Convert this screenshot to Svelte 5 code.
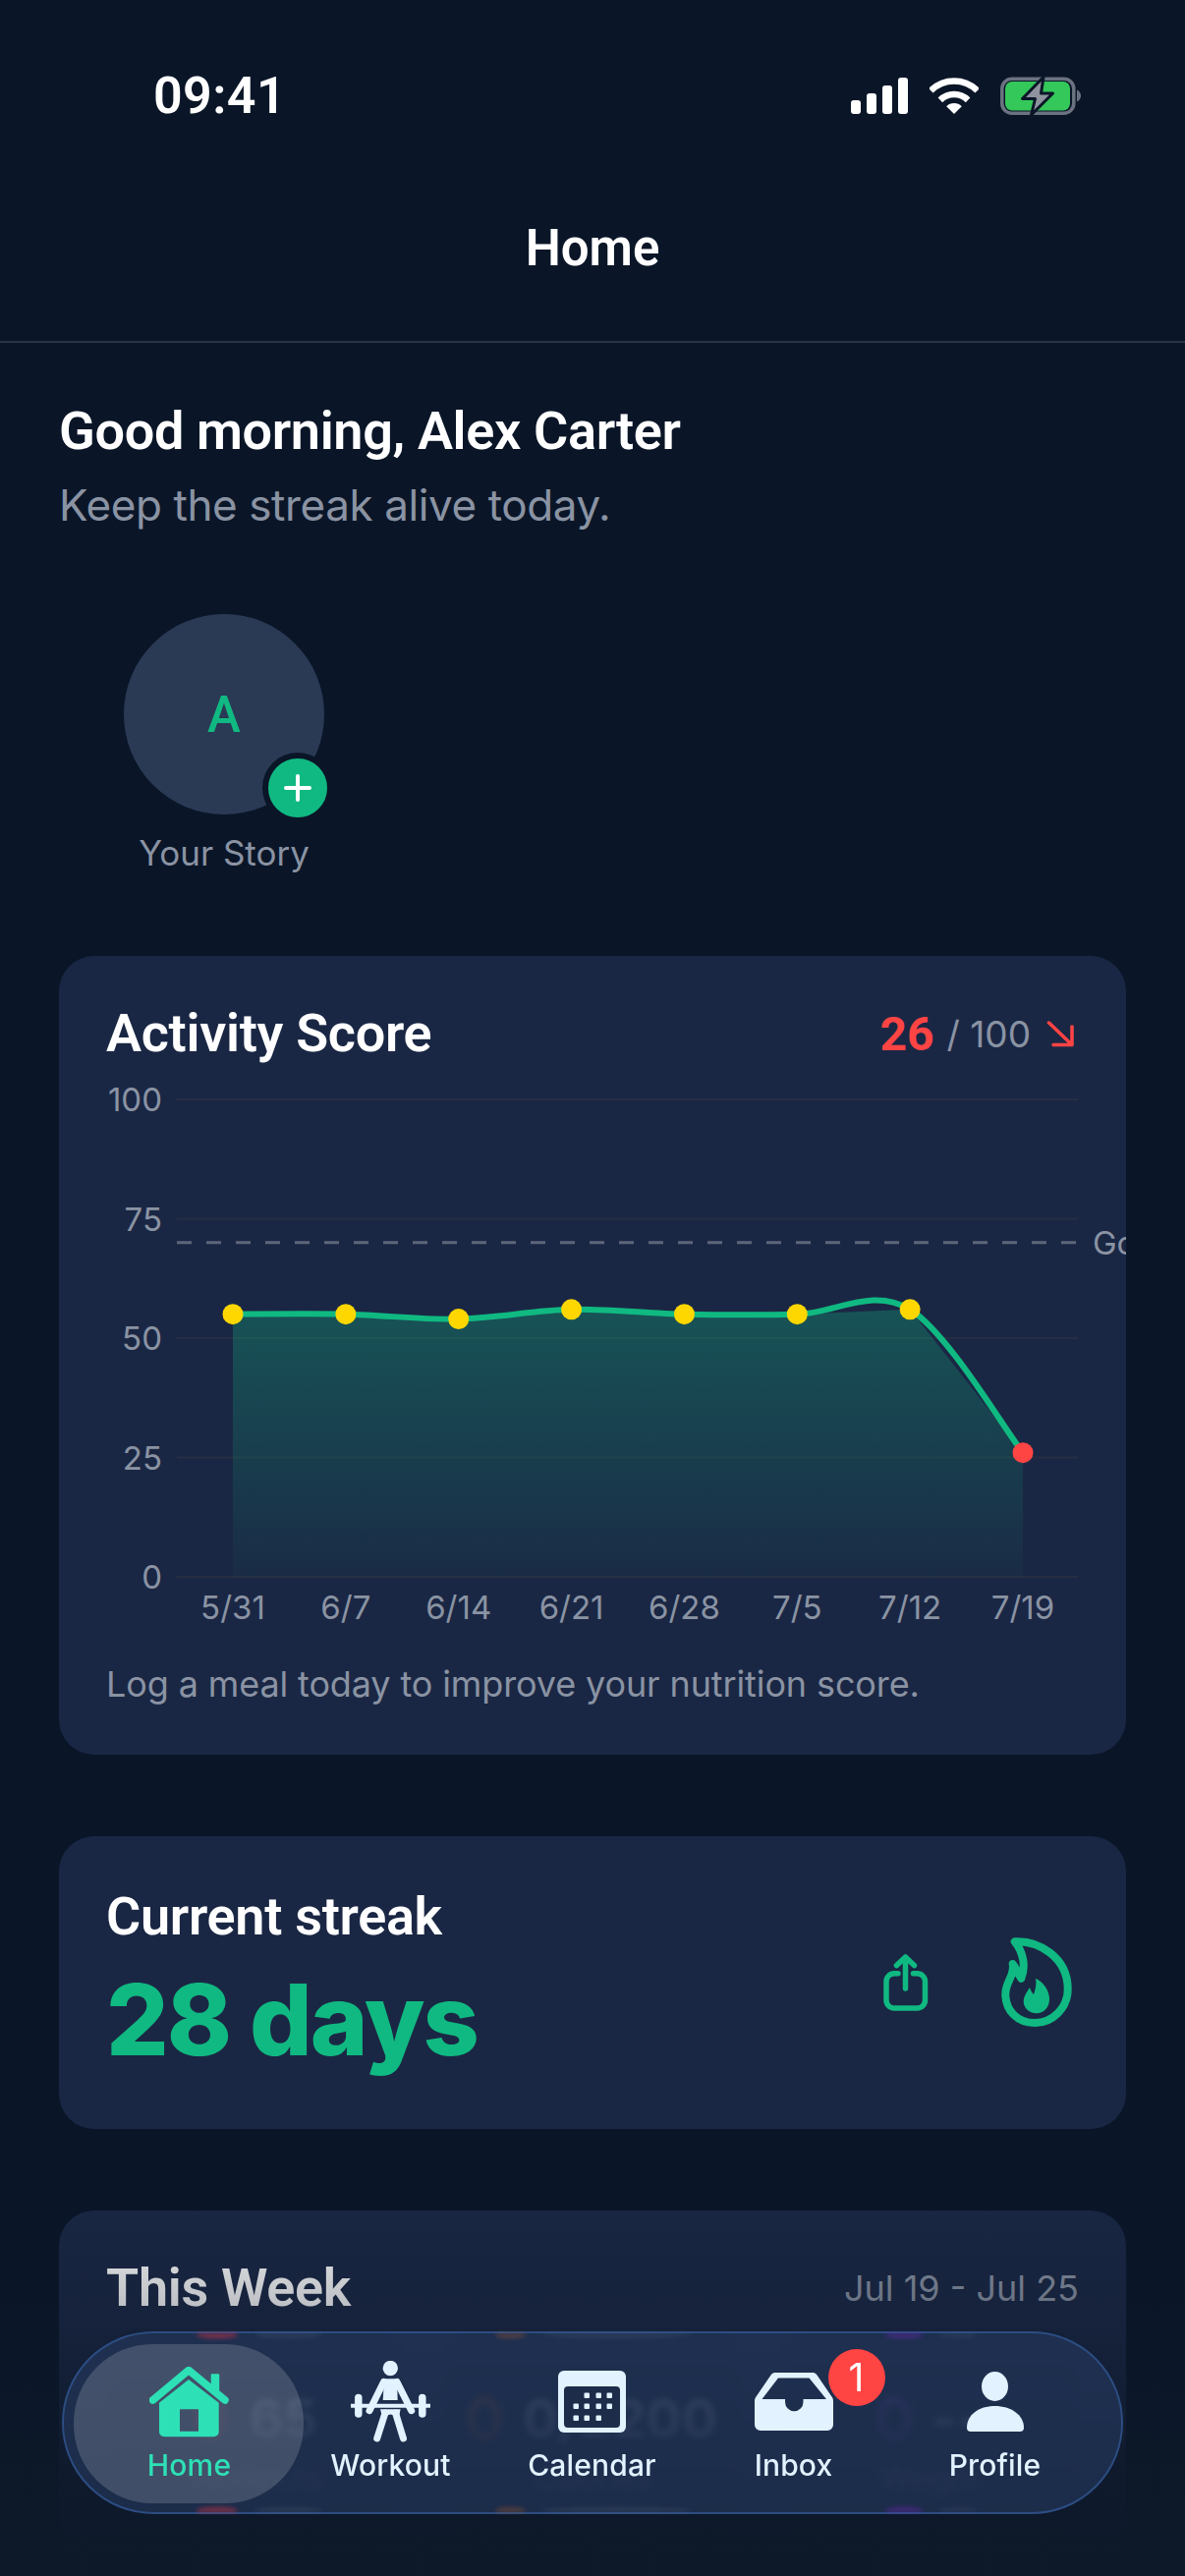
<script lang="ts">
	const points = [55, 55, 54, 56, 55, 55, 56, 26];
	const labels = ['5/31', '6/7', '6/14', '6/21', '6/28', '7/5', '7/12', '7/19'];
	const ticks = [100, 75, 50, 25, 0];

	const left = 129;
	const stepX = 114.86;
	const base = 522;
	const unit = 4.86;

	const px = (i: number) => left + i * stepX;
	const py = (v: number) => base - v * unit;

	// catmull-rom through the samples
	function smooth() {
		const p = points.map((v, i) => [px(i), py(v)]);
		let d = `M${p[0][0]} ${p[0][1]}`;
		for (let i = 0; i < p.length - 1; i++) {
			const a = p[Math.max(i - 1, 0)];
			const b = p[i];
			const c = p[i + 1];
			const e = p[Math.min(i + 2, p.length - 1)];
			d += ` C${b[0] + (c[0] - a[0]) / 6} ${b[1] + (c[1] - a[1]) / 6} ${c[0] - (e[0] - b[0]) / 6} ${c[1] - (e[1] - b[1]) / 6} ${c[0]} ${c[1]}`;
		}
		return d;
	}

	const area =
		`M${px(0)} ${base} ` +
		points.map((v, i) => `L${px(i)} ${py(v)}`).join(' ') +
		` L${px(7)} ${base} Z`;

	const weekCards = [
		{ color: '#ff4444', value: '65', sub: 'Workouts' },
		{ color: '#f97316', value: '0/2200', sub: 'Calories' },
		{ color: '#a855f7', value: '--', sub: 'Weight' }
	];

	const calendarDots = [
		[29, 25], [41, 25], [52, 25],
		[18, 36], [29, 36], [41, 36], [52, 36],
		[18, 48], [29, 48], [41, 48]
	];

	// bits of the cards behind the bar that show along its glass rim
	const rim = [
		{ x: 135, w: 42, color: '#ff3344', alpha: 0.45 },
		{ x: 194, w: 70, color: '#8a93a3', alpha: 0.14 },
		{ x: 439, w: 31, color: '#f97316', alpha: 0.25 },
		{ x: 487, w: 151, color: '#8a93a3', alpha: 0.14 },
		{ x: 836, w: 38, color: '#a020f0', alpha: 0.3 },
		{ x: 891, w: 38, color: '#8a93a3', alpha: 0.1 }
	];
</script>

<div class="screen">
	<div class="status">
		<span class="time">09:41</span>
		<div class="status-icons">
			<svg width="58" height="37" viewBox="0 0 58 37" fill="#fff">
				<rect x="0" y="23" width="10" height="14" rx="3" />
				<rect x="16" y="16" width="10" height="21" rx="3" />
				<rect x="32" y="8" width="10" height="29" rx="3" />
				<rect x="48" y="0" width="10" height="37" rx="3" />
			</svg>
			<svg width="50" height="37" viewBox="0 0 50 37" fill="none" stroke="#fff">
				<path d="M1.3 13.3A33.5 33.5 0 0 1 48.7 13.3" stroke-width="6.5" />
				<path d="M10.9 22.9A20 20 0 0 1 39.1 22.9" stroke-width="6.5" />
				<path d="M25 37L17.2 29.2A11 11 0 0 1 32.8 29.2Z" fill="#fff" stroke="none" />
			</svg>
			<svg width="82" height="40" viewBox="0 0 82 40">
				<rect x="1.8" y="2.3" width="73" height="35" rx="10" fill="none" stroke="#6b7280" stroke-width="3.5" />
				<rect x="5" y="5" width="66" height="29.5" rx="7" fill="#34c759" />
				<path d="M78 13.5c2.5 1 4 3.4 4 6s-1.5 5-4 6z" fill="#6b7280" />
				<path d="M44 0.5L22.5 22.5H35.5L31.5 39L53.5 17H41.5Z" fill="#8e939e" stroke="#0a1628" stroke-width="3" stroke-linejoin="round" />
			</svg>
		</div>
	</div>

	<header class="nav">Home</header>

	<main class="content">
		<section class="greeting">
			<h1>Good morning, Alex Carter</h1>
			<p>Keep the streak alive today.</p>
		</section>

		<section class="stories">
			<div class="story">
				<div class="avatar">
					A
					<span class="add">
						<svg width="30" height="30" viewBox="0 0 30 30" stroke="#fff" stroke-width="4" stroke-linecap="round">
							<path d="M15 3V27M3 15H27" />
						</svg>
					</span>
				</div>
				<span class="story-name">Your Story</span>
			</div>
		</section>

		<section class="card score-card">
			<div class="card-head">
				<h2>Activity Score</h2>
				<div class="score">
					<strong>26</strong>
					<span>/ 100</span>
					<svg width="28" height="28" viewBox="0 0 28 28" fill="none" stroke="#ff4444" stroke-width="3.5" stroke-linecap="round" stroke-linejoin="round">
						<path d="M2.5 3L26 25.5M26 7V25.5H7" />
					</svg>
				</div>
			</div>
			<svg class="chart" width="990" height="589" viewBox="0 0 990 589">
				<defs>
					<linearGradient id="areaFill" x1="0" y1="0" x2="0" y2="1">
						<stop offset="0" stop-color="#10b981" stop-opacity="0.3" />
						<stop offset="1" stop-color="#10b981" stop-opacity="0.03" />
					</linearGradient>
				</defs>
				{#each ticks as t}
					<line x1="72" x2="989" y1={py(t)} y2={py(t)} stroke="#252e42" stroke-width="2" />
					<text class="axis" x="57" y={py(t) + 12} text-anchor="end">{t}</text>
				{/each}
				<path d={area} fill="url(#areaFill)" />
				<line x1="72" x2="988" y1={py(70)} y2={py(70)} stroke="#5d6679" stroke-width="3" stroke-dasharray="15 15" />
				<text class="axis" x="1004" y={py(70) + 12}>Goal</text>
				<path d={smooth()} fill="none" stroke="#10b981" stroke-width="6" stroke-linecap="round" />
				{#each points as v, i}
					<circle cx={px(i)} cy={py(v)} r="10.5" fill={i === 7 ? '#ff4444' : '#ffd700'} />
				{/each}
				{#each labels as l, i}
					<text class="axis" x={px(i)} y="565" text-anchor="middle">{l}</text>
				{/each}
			</svg>
			<p class="tip">Log a meal today to improve your nutrition score.</p>
		</section>

		<section class="card streak-card">
			<div>
				<h2>Current streak</h2>
				<div class="days">28 days</div>
			</div>
			<div class="streak-icons">
				<svg width="46" height="58" viewBox="0 0 46 58" fill="none" stroke="#10b981" stroke-width="5.5" stroke-linecap="round" stroke-linejoin="round">
					<path d="M15 19.8H11a8 8 0 0 0-8 8V47a8 8 0 0 0 8 8H34.5a8 8 0 0 0 8-8V27.8a8 8 0 0 0-8-8H30.5" />
					<path d="M22.5 35V3M13.5 11.5L22.5 3L31.5 11.5" />
				</svg>
				<svg width="72" height="92" viewBox="0 0 72 92">
					<path d="M13.7 4.3C38 3 67.7 20 67.7 52.7C67.7 72 52 87 34.3 87C16 87 4.3 74 4.3 57.7C4.3 45 14 39 11.7 27C15 31 17 37 20.3 41.7C25 30 23 16 13.7 4.3Z" fill="none" stroke="#10b981" stroke-width="8" stroke-linejoin="round" />
					<path d="M35 41.7C44 46 49 55 49 63C49 71.5 43 77.3 36 77.3C28 77.3 22.7 71.5 22.7 65C22.7 60 26 56 29 51C30 54 31 56 33 58C35 53 36 47 35 41.7Z" fill="#10b981" />
				</svg>
			</div>
		</section>

		<section class="card week-card">
			<div class="card-head">
				<h2>This Week</h2>
				<span class="range">Jul 19 - Jul 25</span>
			</div>
			<div class="week-grid">
				{#each weekCards as c}
					<div class="week-item">
						<div class="week-mid">
							<span class="drop" style="border-color: {c.color}"></span>
							<span class="week-value">{c.value}</span>
						</div>
						<span class="week-sub">{c.sub}</span>
					</div>
				{/each}
			</div>
		</section>
	</main>

	<div class="fade"></div>

	<nav class="tabbar">
		<div class="rim">
			{#each rim as r}
				<i class="rim-top" style="left: {r.x}px; width: {r.w}px; background: {r.color}; opacity: {r.alpha}"></i>
				<i class="rim-bottom" style="left: {r.x}px; width: {r.w}px; background: {r.color}; opacity: {r.alpha}"></i>
			{/each}
		</div>
		<div class="tab active">
			<div class="icon">
				<svg width="81" height="72" viewBox="0 0 81 72">
					<path d="M3.5 34L40 3.5L77 34" fill="none" stroke="#2ee0b6" stroke-width="7.5" stroke-linecap="round" stroke-linejoin="round" />
					<rect x="62.7" y="7.3" width="8.5" height="18" rx="1" fill="#2ee0b6" />
					<path fill-rule="evenodd" d="M40 13L70.7 36.7V66.3a5 5 0 0 1-5 5H15a5 5 0 0 1-5-5V36.7ZM31 43.3V65.7H50V43.3Z" fill="#2ee0b6" />
				</svg>
			</div>
			<span>Home</span>
		</div>
		<div class="tab">
			<div class="icon">
				<svg width="81" height="83" viewBox="0 0 81 83" fill="#e2f2ff" stroke="#e2f2ff" stroke-linecap="round">
					<circle cx="40.3" cy="7.5" r="7.7" stroke="none" />
					<path d="M34 18.3H47L47.7 40H32.7Z" stroke="none" />
					<path d="M33.5 21.5L19 50.7M47 21.5L61.7 50.7" stroke-width="7" fill="none" />
					<path d="M1 45.7H80" stroke-width="4" fill="none" />
					<path d="M7.8 37.5V54M72.8 37.5V54" stroke-width="7.5" fill="none" />
					<path d="M30 49.3H50.6L49 57L40.5 54.5L32 57Z" stroke="none" />
					<path d="M35 53L26.7 79M45.5 53L53.5 79" stroke-width="7" fill="none" />
				</svg>
			</div>
			<span>Workout</span>
		</div>
		<div class="tab">
			<div class="icon">
				<svg width="69" height="63" viewBox="0 0 69 63">
					<rect width="69" height="63" rx="6" fill="#e2f2ff" />
					<rect x="6" y="16" width="57" height="42" rx="4" fill="#1d2c49" />
					{#each calendarDots as d}
						<rect x={d[0] - 2.5} y={d[1] - 2.5} width="5.5" height="5.5" rx="1" fill="#e2f2ff" />
					{/each}
				</svg>
			</div>
			<span>Calendar</span>
		</div>
		<div class="tab">
			<div class="icon">
				<svg width="80" height="59" viewBox="0 0 80 59">
					<path fill-rule="evenodd" d="M20.5 0H59.5C61 0 62.5 1 63.5 2.5L78.5 24.5C79.5 26 80 27 80 29V53a6 6 0 0 1-6 6H6a6 6 0 0 1-6-6V29C0 27 .5 26 1.5 24.5L16.5 2.5C17.5 1 19 0 20.5 0ZM24 5.5L7.5 27H31V30a9 9 0 0 0 18.5 0V27H73L55.5 5.5Z" fill="#e2f2ff" />
				</svg>
			</div>
			<span>Inbox</span>
			<b class="badge">1</b>
		</div>
		<div class="tab">
			<div class="icon">
				<svg width="58" height="61" viewBox="0 0 58 61" fill="#e2f2ff">
					<ellipse cx="28.5" cy="15" rx="13.5" ry="15" />
					<path d="M0 57C0 44 12 35 28.5 35S58 44 58 57a4 4 0 0 1-4 4H4a4 4 0 0 1-4-4Z" />
				</svg>
			</div>
			<span>Profile</span>
		</div>
	</nav>
</div>

<style>
	:global(body) {
		margin: 0;
		background: #0a1628;
	}

	.screen {
		position: relative;
		width: 1206px;
		height: 2622px;
		overflow: hidden;
		background: #0a1628;
		color: #fff;
		font-family: Inter, 'Liberation Sans', sans-serif;
	}

	.status {
		display: flex;
		align-items: center;
		justify-content: space-between;
		box-sizing: border-box;
		height: 117px;
		padding: 78px 106px 0 156px;
	}

	.time {
		font-family: Roboto, sans-serif;
		font-size: 52px;
		font-weight: 600;
		letter-spacing: 0.4px;
		line-height: 40px;
	}

	.status-icons {
		display: flex;
		align-items: center;
		gap: 22px;
	}

	.nav {
		box-sizing: border-box;
		height: 232px;
		padding-top: 106px;
		border-bottom: 2px solid #2a3446;
		font-family: Roboto, sans-serif;
		font-size: 51px;
		font-weight: 600;
		line-height: 60px;
		text-align: center;
	}

	.content {
		padding: 0 60px;
	}

	.greeting {
		padding-top: 58px;
	}

	h1 {
		margin: 0;
		font-family: Roboto, sans-serif;
		font-size: 54px;
		font-weight: 600;
		letter-spacing: -0.35px;
		line-height: 64px;
	}

	.greeting p {
		margin: 16px 0 0;
		color: #8a93a3;
		font-size: 44px;
		letter-spacing: -0.4px;
		line-height: 54px;
	}

	.stories {
		display: flex;
		padding: 84px 0 0 63px;
	}

	.story {
		display: flex;
		flex-direction: column;
		align-items: center;
		gap: 15px;
		width: 210px;
	}

	.avatar {
		position: relative;
		display: flex;
		align-items: center;
		justify-content: center;
		width: 204px;
		height: 204px;
		border-radius: 50%;
		background: #2a3a55;
		color: #10b981;
		font-family: Roboto, sans-serif;
		font-size: 51px;
		font-weight: 500;
	}

	.add {
		position: absolute;
		right: -9px;
		bottom: -9px;
		display: flex;
		align-items: center;
		justify-content: center;
		width: 60px;
		height: 60px;
		border: 6px solid #0a1628;
		border-radius: 50%;
		background: #10b981;
	}

	.story-name {
		color: #8a93a3;
		font-size: 35px;
		line-height: 48px;
	}

	.card {
		box-sizing: border-box;
		overflow: hidden;
		border-radius: 36px;
		background: #1a2744;
	}

	h2 {
		margin: 0;
		font-family: Roboto, sans-serif;
		font-size: 54px;
		font-weight: 600;
		letter-spacing: -0.3px;
		line-height: 62px;
	}

	.card-head {
		display: flex;
		align-items: center;
		justify-content: space-between;
	}

	.score-card {
		height: 813px;
		margin-top: 81px;
		padding: 48px 48px 0;
	}

	.score {
		display: flex;
		align-items: center;
		padding-right: 5px;
	}

	.score strong {
		color: #ff4444;
		font-family: Roboto, sans-serif;
		font-size: 48px;
		font-weight: 700;
	}

	.score span {
		margin: 0 16px 0 13px;
		color: #8a93a3;
		font-size: 37px;
	}

	.chart {
		display: block;
		overflow: visible;
	}

	.axis {
		fill: #8a93a3;
		font-size: 33px;
	}

	.tip {
		margin: 18px 0 0;
		color: #8a93a3;
		font-size: 36px;
		letter-spacing: -0.12px;
		line-height: 48px;
	}

	.streak-card {
		display: flex;
		align-items: center;
		justify-content: space-between;
		height: 298px;
		margin-top: 83px;
		padding: 0 55px 0 48px;
	}

	.days {
		margin-top: 14px;
		color: #10b981;
		font-size: 100px;
		font-weight: 800;
		letter-spacing: -2px;
		line-height: 120px;
	}

	.streak-icons {
		display: flex;
		align-items: center;
		gap: 74px;
	}

	.week-card {
		height: 500px;
		margin-top: 83px;
		padding: 48px 48px 0;
	}

	.range {
		color: #8a93a3;
		font-size: 36px;
	}

	.week-grid {
		display: grid;
		grid-template-columns: repeat(3, 1fr);
		gap: 39px;
		margin-top: 12px;
	}

	.week-item {
		box-sizing: border-box;
		display: flex;
		flex-direction: column;
		align-items: center;
		height: 210px;
		border-radius: 30px;
		background: #18243f;
		padding-top: 50px;
	}

	.week-mid {
		display: flex;
		align-items: center;
		gap: 22px;
	}

	.drop {
		box-sizing: border-box;
		width: 34px;
		height: 46px;
		border: 7px solid;
		border-radius: 50%;
		opacity: 0.45;
	}

	.week-sub {
		color: #8a93a3;
		font-size: 30px;
		line-height: 40px;
	}

	.week-value {
		color: #7d8697;
		font-size: 54px;
		font-weight: 700;
		line-height: 80px;
	}

	.fade {
		position: absolute;
		left: 0;
		right: 0;
		bottom: 0;
		height: 400px;
		background: linear-gradient(to bottom, rgba(13, 24, 41, 0), rgba(13, 24, 41, 0.3) 35%, rgba(13, 24, 41, 0.85) 72%, rgba(13, 24, 41, 0.97) 90%);
		pointer-events: none;
	}

	.tabbar {
		position: absolute;
		left: 63px;
		top: 2373px;
		box-sizing: border-box;
		display: grid;
		grid-template-columns: repeat(5, 205px);
		width: 1080px;
		height: 186px;
		padding: 0 25px;
		border: 2.5px solid #2c4d82;
		border-radius: 93px;
		background: rgba(38, 58, 96, 0.6);
		backdrop-filter: blur(3px);
	}

	.rim {
		position: absolute;
		inset: 0;
		overflow: hidden;
		border-radius: inherit;
		filter: blur(2px);
	}

	.rim i {
		position: absolute;
		height: 7px;
		border-radius: 50%;
	}

	.rim-top {
		top: -2px;
	}

	.rim-bottom {
		bottom: -2px;
	}

	.tab {
		position: relative;
		display: flex;
		flex-direction: column;
		align-items: center;
		padding-top: 25.5px;
		color: #e2f2ff;
		font-size: 30px;
		font-weight: 500;
		letter-spacing: 0.15px;
		line-height: 40px;
	}

	.icon {
		position: relative;
		display: flex;
		align-items: center;
		justify-content: center;
		height: 88px;
	}

	.tab span {
		position: relative;
	}

	.tab.active {
		color: #2ee0b6;
	}

	.tab.active::before {
		content: '';
		position: absolute;
		left: -15.5px;
		right: -13.5px;
		top: 10.5px;
		bottom: 9.5px;
		border-radius: 80px;
		background: rgba(255, 255, 255, 0.16);
	}

	.badge {
		position: absolute;
		left: 137.5px;
		top: 15.5px;
		width: 58px;
		height: 58px;
		border-radius: 50%;
		background: #ff4444;
		color: #fff;
		font-size: 39px;
		font-weight: 400;
		line-height: 58px;
		text-align: center;
	}
</style>
